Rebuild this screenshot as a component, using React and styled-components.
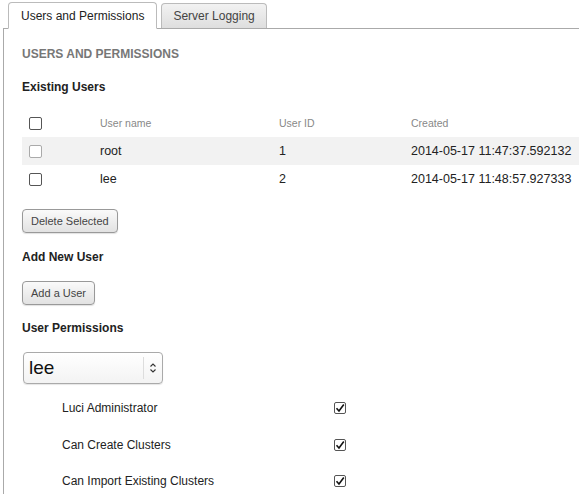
import React from "react";
import styled, { createGlobalStyle } from "styled-components";

const GlobalStyle = createGlobalStyle`
  body {
    margin: 0;
    background: #fff;
    font-family: "Liberation Sans", Arial, sans-serif;
    color: #222;
  }
`;

const Page = styled.div`
  padding: 2px 0 0 3px;
`;

const TabBar = styled.div`
  display: flex;
  align-items: flex-end;
  gap: 4px;
  padding-left: 5px;
  border-bottom: 1px solid #aaa;
  height: 26px;
`;

const Tab = styled.div`
  box-sizing: border-box;
  height: ${({ $active }) => ($active ? "27px" : "25px")};
  margin-bottom: ${({ $active }) => ($active ? "-1px" : "0")};
  padding: 0 ${({ $active }) => ($active ? "12px" : "11px")};
  display: flex;
  align-items: center;
  font-size: 12px;
  color: ${({ $active }) => ($active ? "#222" : "#444")};
  background: ${({ $active }) =>
    $active ? "#fff" : "linear-gradient(#f2f2f2, #dedede)"};
  border: 1px solid #bbb;
  border-bottom: ${({ $active }) => ($active ? "1px solid #fff" : "none")};
  border-radius: 4px 4px 0 0;
`;

const Panel = styled.div`
  border-left: 1px solid #aaa;
  padding: 17px 0 0 18px;
  height: 470px;
  box-sizing: border-box;
`;

const Heading = styled.div`
  font-size: 12px;
  line-height: 16px;
  font-weight: bold;
  color: #777;
`;

const Subheading = styled.div`
  font-size: 12px;
  line-height: 16px;
  font-weight: bold;
  color: #222;
  margin-top: ${({ $top }) => $top}px;
`;

const Table = styled.div`
  margin-top: 14px;
`;

const Row = styled.div`
  display: grid;
  grid-template-columns: 78px 179px 132px 1fr;
  align-items: center;
  height: 28px;
  font-size: ${({ $head }) => ($head ? "10.5px" : "12.5px")};
  color: ${({ $head }) => ($head ? "#888" : "#222")};
  background: ${({ $shade }) => ($shade ? "#f2f2f2" : "transparent")};
`;

const Cell = styled.div`
  padding-left: ${({ $pad }) => $pad || 0}px;
  display: flex;
  align-items: center;
`;

const Box = styled.span`
  box-sizing: border-box;
  width: ${({ $size }) => $size}px;
  height: ${({ $size }) => $size}px;
  border: 1px solid ${({ $disabled }) => ($disabled ? "#aaa" : "#555")};
  border-radius: 2px;
  background: #fff;
  display: inline-flex;
  align-items: center;
  justify-content: center;
`;

const Button = styled.button`
  display: block;
  margin-top: ${({ $top }) => $top}px;
  height: 24px;
  padding: 0 8px;
  font-family: "Liberation Sans", Arial, sans-serif;
  font-size: 11px;
  color: #444;
  background: linear-gradient(#fafafa, #e2e2e2);
  border: 1px solid #999;
  border-radius: 4px;
  box-shadow: 0 1px 1px rgba(0, 0, 0, 0.12);
`;

const Select = styled.div`
  box-sizing: border-box;
  margin: 16px 0 0 1px;
  width: 140px;
  height: 32px;
  border: 1px solid #aaa;
  border-radius: 4px;
  background: linear-gradient(#fff, #f3f3f3);
  display: flex;
  align-items: center;
  box-shadow: 0 1px 1px rgba(0, 0, 0, 0.1);
`;

const SelectValue = styled.span`
  flex: 1;
  padding-left: 5px;
  font-size: 19px;
  color: #111;
`;

const SelectArrow = styled.span`
  width: 18px;
  height: 22px;
  border-left: 1px solid #ddd;
  display: flex;
  align-items: center;
  justify-content: center;
`;

const PermList = styled.div`
  margin-top: 6px;
  padding-left: 40px;
`;

const PermRow = styled.div`
  display: grid;
  grid-template-columns: 272px 12px;
  align-items: center;
  height: 36.5px;
  font-size: 12px;
  color: #222;
`;

const Check = () => (
  <svg width="10" height="10" viewBox="0 0 10 10">
    <path d="M1.5 5.2 L4 8 L8.8 1.5" fill="none" stroke="#111" strokeWidth="1.6" />
  </svg>
);

const users = [
  { name: "root", id: 1, created: "2014-05-17 11:47:37.592132", disabled: true },
  { name: "lee", id: 2, created: "2014-05-17 11:48:57.927333" },
];

const perms = ["Luci Administrator", "Can Create Clusters", "Can Import Existing Clusters"];

const App = () => {
  return (
    <Page>
      <GlobalStyle />
      <TabBar>
        <Tab $active>Users and Permissions</Tab>
        <Tab>Server Logging</Tab>
      </TabBar>
      <Panel>
        <Heading>USERS AND PERMISSIONS</Heading>
        <Subheading $top={17}>Existing Users</Subheading>
        <Table>
          <Row $head>
            <Cell $pad={7}><Box $size={13} /></Cell>
            <Cell>User name</Cell>
            <Cell>User ID</Cell>
            <Cell>Created</Cell>
          </Row>
          {users.map((u, i) => (
            <Row key={u.name} $shade={i === 0}>
              <Cell $pad={7}><Box $size={13} $disabled={u.disabled} /></Cell>
              <Cell>{u.name}</Cell>
              <Cell>{u.id}</Cell>
              <Cell>{u.created}</Cell>
            </Row>
          ))}
        </Table>
        <Button $top={16}>Delete Selected</Button>
        <Subheading $top={16}>Add New User</Subheading>
        <Button $top={16}>Add a User</Button>
        <Subheading $top={15}>User Permissions</Subheading>
        <Select>
          <SelectValue>lee</SelectValue>
          <SelectArrow>
            <svg width="8" height="12" viewBox="0 0 8 12">
              <path d="M1.5 4.5 L4 2 L6.5 4.5 M1.5 7.5 L4 10 L6.5 7.5" fill="none" stroke="#333" strokeWidth="1.1" />
            </svg>
          </SelectArrow>
        </Select>
        <PermList>
          {perms.map((p) => (
            <PermRow key={p}>
              <span>{p}</span>
              <Box $size={12}><Check /></Box>
            </PermRow>
          ))}
        </PermList>
      </Panel>
    </Page>
  );
};

export default App;
